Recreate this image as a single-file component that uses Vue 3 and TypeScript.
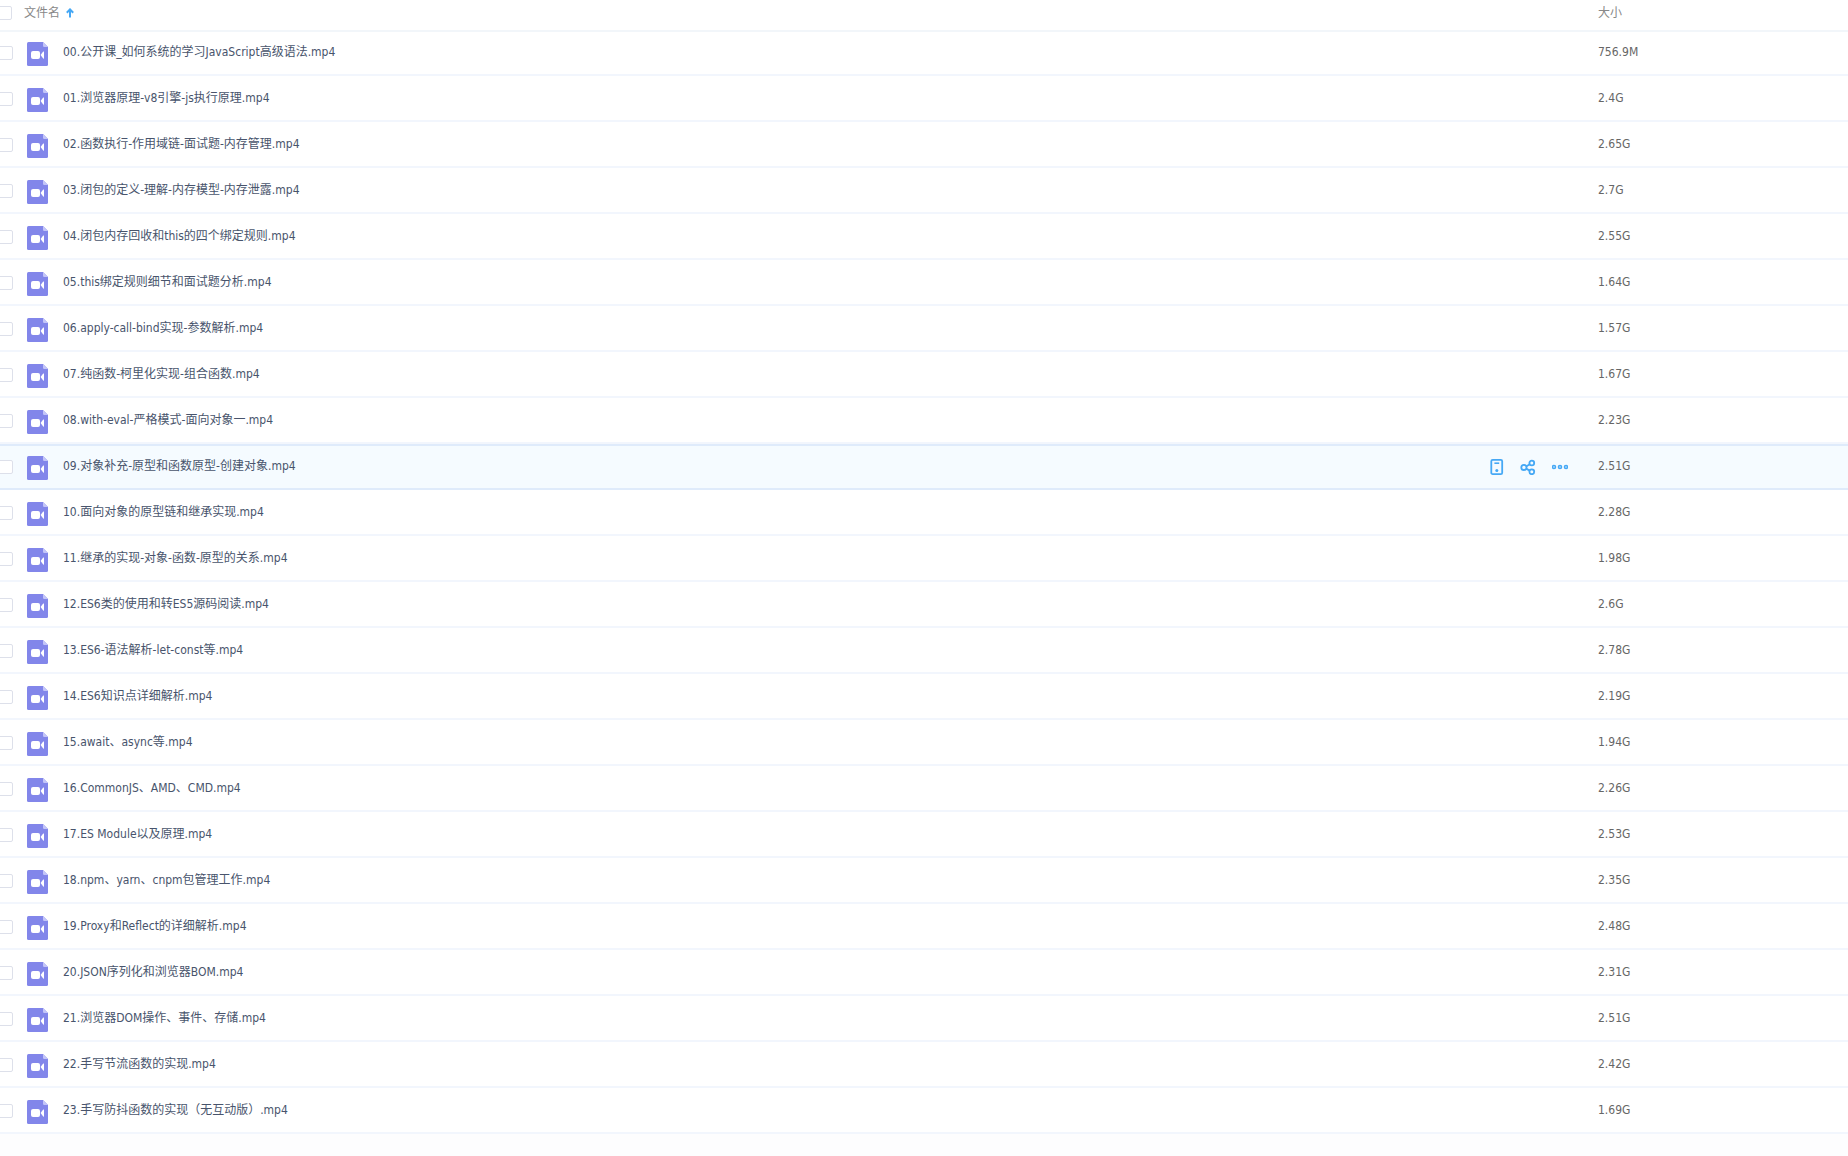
<script setup lang="ts">
interface FileRow {
  name: string
  size: string
}

const activeIndex = 9

const files: FileRow[] = [
  { name: '00.公开课_如何系统的学习JavaScript高级语法.mp4', size: '756.9M' },
  { name: '01.浏览器原理-v8引擎-js执行原理.mp4', size: '2.4G' },
  { name: '02.函数执行-作用域链-面试题-内存管理.mp4', size: '2.65G' },
  { name: '03.闭包的定义-理解-内存模型-内存泄露.mp4', size: '2.7G' },
  { name: '04.闭包内存回收和this的四个绑定规则.mp4', size: '2.55G' },
  { name: '05.this绑定规则细节和面试题分析.mp4', size: '1.64G' },
  { name: '06.apply-call-bind实现-参数解析.mp4', size: '1.57G' },
  { name: '07.纯函数-柯里化实现-组合函数.mp4', size: '1.67G' },
  { name: '08.with-eval-严格模式-面向对象一.mp4', size: '2.23G' },
  { name: '09.对象补充-原型和函数原型-创建对象.mp4', size: '2.51G' },
  { name: '10.面向对象的原型链和继承实现.mp4', size: '2.28G' },
  { name: '11.继承的实现-对象-函数-原型的关系.mp4', size: '1.98G' },
  { name: '12.ES6类的使用和转ES5源码阅读.mp4', size: '2.6G' },
  { name: '13.ES6-语法解析-let-const等.mp4', size: '2.78G' },
  { name: '14.ES6知识点详细解析.mp4', size: '2.19G' },
  { name: '15.await、async等.mp4', size: '1.94G' },
  { name: '16.CommonJS、AMD、CMD.mp4', size: '2.26G' },
  { name: '17.ES Module以及原理.mp4', size: '2.53G' },
  { name: '18.npm、yarn、cnpm包管理工作.mp4', size: '2.35G' },
  { name: '19.Proxy和Reflect的详细解析.mp4', size: '2.48G' },
  { name: '20.JSON序列化和浏览器BOM.mp4', size: '2.31G' },
  { name: '21.浏览器DOM操作、事件、存储.mp4', size: '2.51G' },
  { name: '22.手写节流函数的实现.mp4', size: '2.42G' },
  { name: '23.手写防抖函数的实现（无互动版）.mp4', size: '1.69G' },
]
</script>

<template>
  <table class="files">
    <thead>
      <tr>
        <th scope="col">
          <div class="head-cell">
            <input type="checkbox" class="check" aria-label="全选" />
            <button type="button" class="sort">
              文件名
              <svg width="8" height="10" viewBox="0 0 8 10" aria-hidden="true">
                <path d="M4 9.5V1.5M0.8 4.8L4 1.4L7.2 4.8" fill="none" stroke="#45a8f5" stroke-width="2" />
              </svg>
            </button>
          </div>
        </th>
        <th scope="col" class="size">大小</th>
      </tr>
    </thead>
    <tbody>
      <tr v-for="(file, i) in files" :key="file.name" :class="{ active: i === activeIndex }">
        <td>
          <div class="name-cell">
            <input :id="`file-${i}`" type="checkbox" class="check" />
            <svg class="file-icon" width="21" height="24" viewBox="0 0 21 24" aria-hidden="true">
              <path d="M1.5 0H16L21 5V22.5Q21 24 19.5 24H1.5Q0 24 0 22.5V1.5Q0 0 1.5 0Z" fill="#8286ea" />
              <path d="M16 0L21 5H17.2Q16 5 16 3.8Z" fill="#c3c5f8" />
              <rect x="4" y="9" width="9" height="8" rx="2" fill="#fff" />
              <path d="M13.6 13L16.2 9.6Q17 9 17 10V16Q17 17 16.2 16.4Z" fill="#fff" />
            </svg>
            <label :for="`file-${i}`" class="name">{{ file.name }}</label>
            <div v-if="i === activeIndex" class="actions">
              <button type="button" aria-label="发送到手机">
                <svg width="14" height="16" viewBox="0 0 14 16" aria-hidden="true">
                  <rect x="1.3" y="0.9" width="10.9" height="14.2" rx="1.4" fill="none" stroke="#45a8f5" stroke-width="1.8" />
                  <path d="M4.4 4.2H9.2" stroke="#45a8f5" stroke-width="1.6" />
                  <circle cx="6.8" cy="11.5" r="1.5" fill="#45a8f5" />
                </svg>
              </button>
              <button type="button" aria-label="分享">
                <svg width="16" height="16" viewBox="0 0 16 16" aria-hidden="true">
                  <g fill="none" stroke="#45a8f5" stroke-width="1.8">
                    <circle cx="3.9" cy="8.4" r="2.6" />
                    <circle cx="11.8" cy="4" r="2.4" />
                    <circle cx="11.8" cy="12.8" r="2.4" />
                    <path d="M6.2 7.4L9.7 5.2M6.2 9.6L9.7 11.6" />
                  </g>
                </svg>
              </button>
              <button type="button" aria-label="更多">
                <svg width="16" height="16" viewBox="0 0 16 16" aria-hidden="true">
                  <g fill="none" stroke="#45a8f5" stroke-width="1.6">
                    <circle cx="2" cy="8" r="1.5" />
                    <circle cx="8" cy="8" r="1.5" />
                    <circle cx="14" cy="8" r="1.5" />
                  </g>
                </svg>
              </button>
            </div>
          </div>
        </td>
        <td class="size">{{ file.size }}</td>
      </tr>
    </tbody>
  </table>
</template>

<style>
body {
  margin: 0;
  background: #fdfdfe;
}
</style>

<style scoped>
.files {
  width: 100%;
  table-layout: fixed;
  border-spacing: 0;
  overflow: hidden;
  background: #fff;
  font-family: "DejaVu Sans Condensed", "Noto Sans CJK SC", sans-serif;
  font-size: 12px;
  line-height: 20px;
  color: #48546c;
}

th,
td {
  box-sizing: border-box;
  padding: 0;
  text-align: left;
  font-weight: 400;
}

th {
  height: 30px;
  padding-bottom: 5px;
  color: #888;
}

td {
  height: 46px;
  border-top: 2px solid transparent;
  border-bottom: 2px solid #f2f6fd;
}

tbody tr:first-child td {
  border-top-color: #f2f6fa;
}

.active td {
  background: #f5fbff;
  border-color: #dfebfb;
}

.size {
  width: 250px;
}

td.size {
  padding-bottom: 3px;
  color: #666;
}

.head-cell,
.name-cell,
.actions {
  display: flex;
  align-items: center;
}

.check {
  appearance: none;
  box-sizing: border-box;
  flex: none;
  width: 15px;
  height: 14px;
  margin: 0 0 1px -2px;
  border: 1px solid #dde0ea;
  border-radius: 2px;
  background: #fff;
}

.head-cell .check {
  width: 14px;
  margin-bottom: 0;
}

.sort {
  display: flex;
  align-items: center;
  gap: 6px;
  margin-left: 12px;
}

button {
  padding: 0;
  border: 0;
  background: none;
  font: inherit;
  color: inherit;
  cursor: pointer;
}

.file-icon {
  flex: none;
  margin: 2px 15px 0 14px;
}

.name {
  padding-bottom: 3px;
}

.actions {
  gap: 16px;
  margin: 0 30px 0 auto;
}

.actions button,
.actions svg {
  display: block;
}
</style>
